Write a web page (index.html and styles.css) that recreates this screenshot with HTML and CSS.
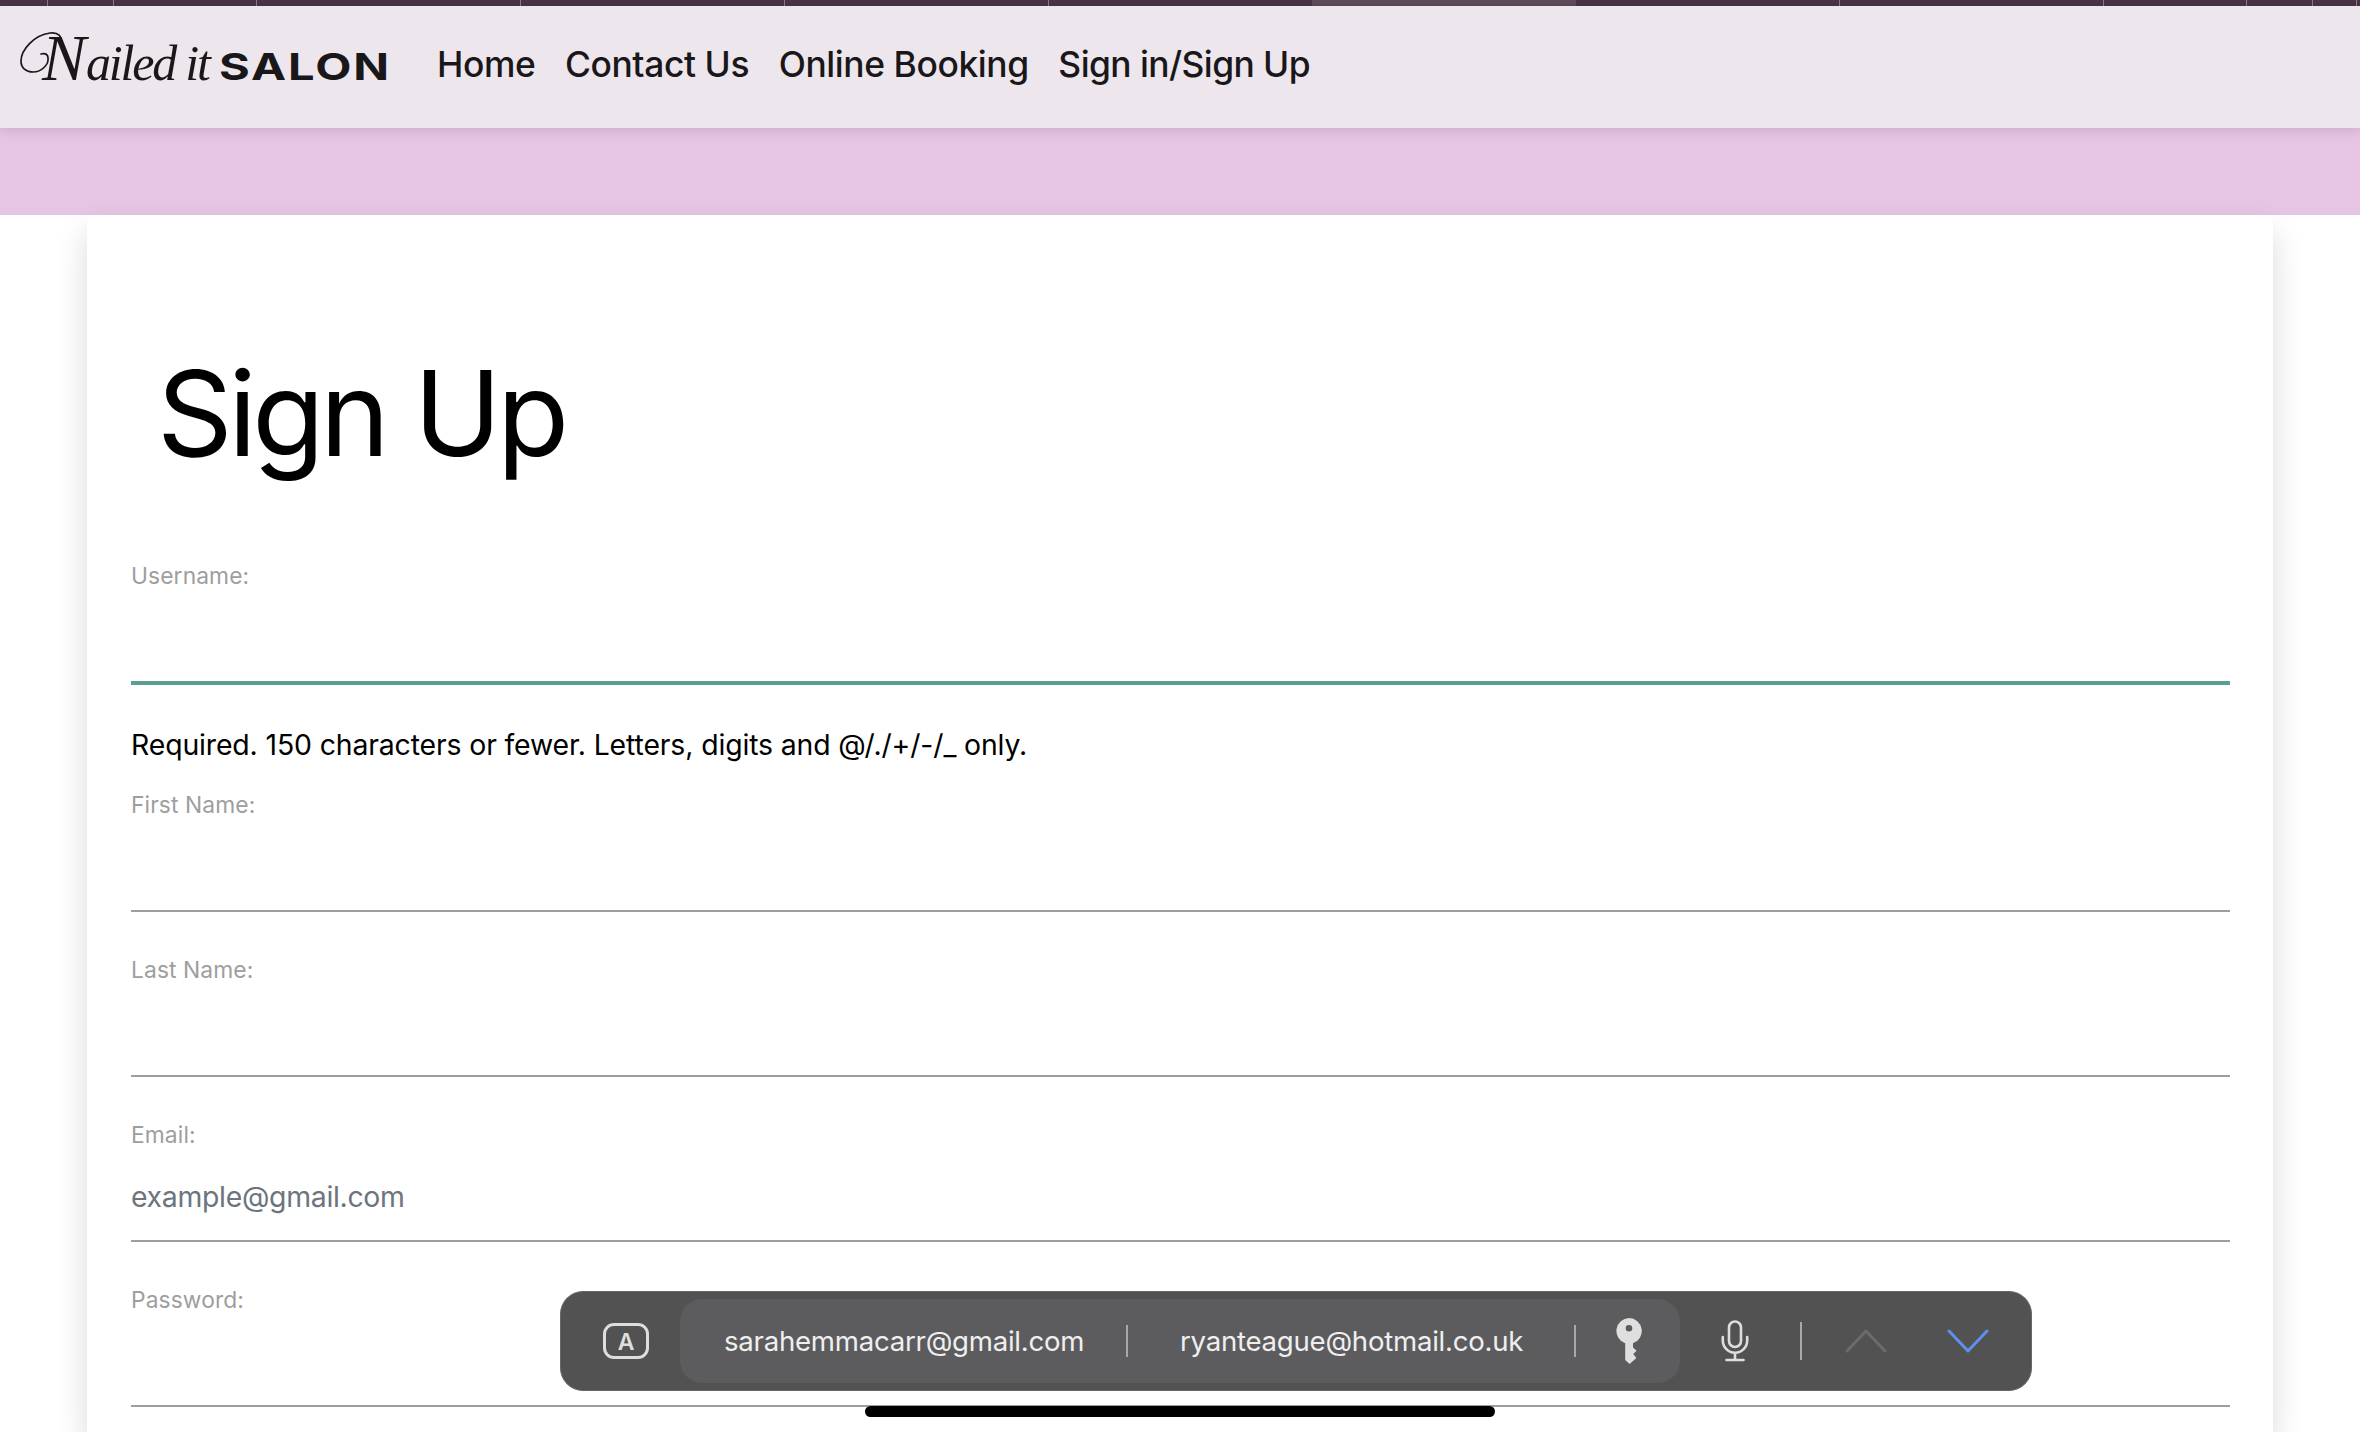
FILE: index.html
```
<!DOCTYPE html>
<html lang="en">
<head>
<meta charset="utf-8">
<title>Nailed it Salon - Sign Up</title>
<link rel="stylesheet" href="styles.css">
</head>
<body>
<div class="tabs"><i class="tab t1"></i><i class="tab t2"></i><i class="tab t3"></i><i class="tab t4"></i><i class="tab t5"></i><i class="tab t6"></i><i class="tab t7"></i><i class="tab active"></i><i class="tab t8"></i><i class="tab t9"></i><i class="tab t10"></i><i class="tab t11"></i><i class="tab t12"></i></div>
<header class="navbar">
  <svg class="logo" width="400" height="122" viewBox="0 6 400 122" fill="#19171a">
    <path d="M60 44 C63 36 58 32 50 33 C34 35 21 50 21 61 C21 68 26 72 33 72 C42 72 49 64 48 58 C48 54 45 53 41 54" fill="none" stroke="#19171a" stroke-width="1.7" stroke-linecap="round"/>
    <text class="script" y="80"><tspan x="42" font-size="66">N</tspan><tspan x="86" font-size="50" letter-spacing="-2.2">ailed it</tspan></text>
    <text class="caps" x="219" y="80" font-size="37" textLength="172" lengthAdjust="spacingAndGlyphs" letter-spacing="1.5">SALON</text>
  </svg>
  <nav class="links"><a>Home</a><a>Contact Us</a><a>Online Booking</a><a class="sign">Sign in/Sign Up</a></nav>
</header>
<div class="banner"></div>
<main class="card">
  <h1>Sign Up</h1>
  <form>
    <div class="field focused"><label>Username:</label><div class="input"></div></div>
    <p class="help">Required. 150 characters or fewer. Letters, digits and @/./+/-/_ only.</p>
    <div class="field"><label>First Name:</label><div class="input"></div></div>
    <div class="field"><label>Last Name:</label><div class="input"></div></div>
    <div class="field"><label>Email:</label><div class="input">example@gmail.com</div></div>
    <div class="field last"><label>Password:</label><div class="input"></div></div>
  </form>
</main>
<div class="keybar">
  <svg class="abox" width="46" height="36" viewBox="0 0 46 36"><rect x="1.5" y="1.5" width="43" height="33" rx="9.5" fill="none" stroke="#dedede" stroke-width="3"/><text x="23" y="26.6" text-anchor="middle" font-family="Inter, sans-serif" font-weight="600" font-size="23" fill="#dedede">A</text></svg>
  <div class="suggest">
    <span class="mail first">sarahemmacarr@gmail.com</span><i class="rule"></i>
    <span class="mail second">ryanteague@hotmail.co.uk</span><i class="rule"></i>
    <svg class="key" width="26" height="47" viewBox="0 0 26 47"><path fill="#dfdfe0" fill-rule="evenodd" d="M13 0a13 13 0 0 1 4 25.3v4.2l3.6 3.3-3.4 3.3 3.2 4-6.8 5.9L9.2 42V25.3A13 13 0 0 1 13 0zm0 7a3.3 3.3 0 1 0 0 6.6a3.3 3.3 0 0 0 0-6.6z"/></svg>
  </div>
  <svg class="mic" width="28" height="42" viewBox="0 0 28 42" fill="none" stroke="#dedede" stroke-width="2.6" stroke-linecap="round"><rect x="8" y="1.5" width="12" height="25.5" rx="6"/><path d="M1.8 17v3.5a12.2 12.2 0 0 0 24.4 0V17M14 33v7M5.5 40h17"/></svg>
  <i class="rule tall"></i>
  <svg class="up" width="42" height="24" viewBox="0 0 42 24" fill="none" stroke="#6b6b6b" stroke-width="3" stroke-linecap="round" stroke-linejoin="round"><path d="M2 22 21 2l19 20"/></svg>
  <svg class="down" width="42" height="24" viewBox="0 0 42 24" fill="none" stroke="#6090ee" stroke-width="3" stroke-linecap="round" stroke-linejoin="round"><path d="M2 2l19 20L40 2"/></svg>
</div>
<div class="home-indicator"></div>
</body>
</html>
```
FILE: styles.css
```
* { box-sizing: border-box; }
body {
  margin: 0;
  width: 2360px;
  height: 1432px;
  overflow: hidden;
  position: relative;
  background: #fff;
  font-family: Inter, "Liberation Sans", sans-serif;
  color: #000;
}
.tabs { display: flex; height: 6px; background: #4a3346; }
.tab { flex: none; height: 6px; border-right: 1px solid #8d7a8a; }
.t1 { width: 48px; }
.t2 { width: 66px; }
.t3 { width: 143px; }
.t4, .t5, .t6 { width: 264px; }
.t7 { width: 263px; border-right: 0; }
.active { width: 264px; background: #5e4b5b; border-right: 0; }
.t8 { width: 264px; }
.t9 { width: 264px; }
.t10 { width: 143px; }
.t11 { width: 66px; }
.t12 { width: 44px; }
.navbar {
  display: flex;
  height: 122px;
  position: relative;
  z-index: 2;
  background: #ede6ed;
  box-shadow: 0 2px 12px rgba(0,0,0,.13);
}
.logo { display: block; flex: none; }
.script { font-family: "Liberation Serif", serif; font-style: italic; }
.caps { font-family: Inter, sans-serif; font-weight: 700; }
.links {
  display: flex;
  gap: 29.6px;
  margin-left: 37px;
  padding-top: 37px;
  font-size: 35.4px;
  line-height: 44px;
  font-weight: 500;
  letter-spacing: -.4px;
  color: #19171a;
  white-space: nowrap;
}
.sign { letter-spacing: -.57px; }
.banner { height: 87px; background: #e6c4e3; }
.card {
  margin: 0 87px;
  padding: 130px 43px 0 44px;
  height: 1217px;
  border-radius: 8px 8px 0 0;
  background: #fff;
  box-shadow: 0 16px 32px rgba(0,0,0,.15);
}
h1 {
  margin: 0 0 80px;
  padding-left: 26px;
  font-size: 118px;
  line-height: 136px;
  font-weight: 400;
  letter-spacing: -4.57px;
}
.field { margin-bottom: 43px; }
.last { margin-bottom: 0; }
label {
  display: block;
  font-size: 22.8px;
  line-height: 30px;
  letter-spacing: .1px;
  color: #9e9e9e;
}
.input {
  height: 92px;
  border-bottom: 2px solid #9e9e9e;
  font-size: 28.4px;
  line-height: 93px;
  letter-spacing: -.3px;
  color: #6c757d;
}
.focused { margin-bottom: 40px; }
.focused .input { height: 94px; border-bottom: 4px solid #5a9e95; }
.help {
  margin: 0 0 25px;
  font-size: 28.4px;
  line-height: 40px;
  letter-spacing: -.13px;
}
.keybar {
  position: absolute;
  left: 560px;
  top: 1291px;
  width: 1472px;
  height: 100px;
  display: flex;
  align-items: center;
  border: 1px solid #686868;
  border-radius: 23px;
  background: #525252;
}
.keybar svg { display: block; flex: none; }
.abox { margin-left: 42px; }
.suggest {
  display: flex;
  align-items: center;
  width: 1000px;
  height: 84px;
  margin-left: 31px;
  border-radius: 22px;
  background: #5c5c5e;
}
.mail {
  flex: none;
  font-size: 27.6px;
  line-height: 40px;
  letter-spacing: -.25px;
  color: #efeff0;
  white-space: nowrap;
}
.first { width: 402px; margin-left: 44px; }
.second { width: 394px; margin-left: 52px; }
.rule { flex: none; width: 2px; height: 32px; background: #a8a8aa; }
.key { margin-left: 40px; }
.mic { margin-left: 41px; }
.tall { height: 38px; margin-left: 51px; }
.up { margin-left: 43px; }
.down { margin-left: 60px; }
.home-indicator {
  position: absolute;
  left: 865px;
  top: 1406px;
  width: 630px;
  height: 11px;
  border-radius: 5.5px;
  background: #000;
}
```
